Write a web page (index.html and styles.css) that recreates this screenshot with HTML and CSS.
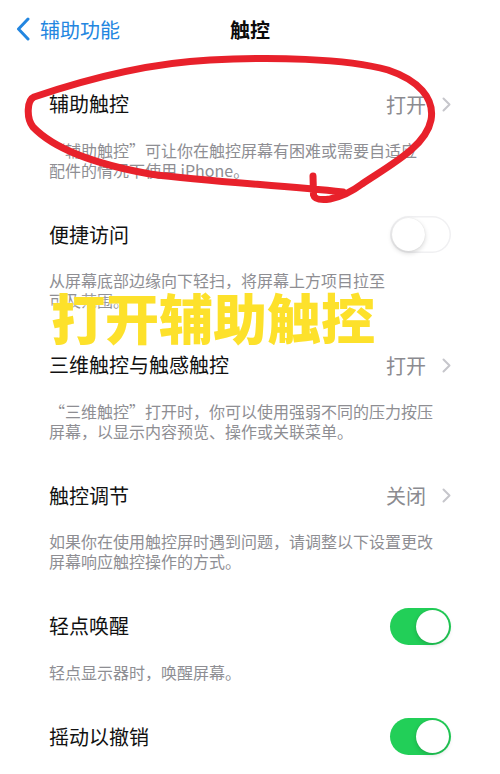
FILE: index.html
```html
<!DOCTYPE html>
<html lang="zh-CN">
<head>
    <meta charset="UTF-8">
    <meta name="viewport" content="width=device-width, initial-scale=1.0">
    <title>触控</title>
    <link rel="stylesheet" href="styles.css">
</head>
<body>
    <div class="page">
        <header class="nav">
            <a class="back" href="#">
                <svg class="back-icon" width="16" height="24" viewBox="0 0 16 24">
                    <path d="M13 2 L3.5 12 L13 22" fill="none" stroke="currentColor" stroke-width="3" stroke-linecap="round" stroke-linejoin="round"/>
                </svg>
                <span>辅助功能</span>
            </a>
            <h1 class="title">触控</h1>
        </header>

        <div class="list">
            <div class="section">
                <div class="row">
                    <span class="label">辅助触控</span>
                    <span class="value">打开<svg class="chevron" width="9" height="15" viewBox="0 0 9 15"><path d="M1.5 1.5 L7.5 7.5 L1.5 13.5" fill="none" stroke="currentColor" stroke-width="2" stroke-linecap="round" stroke-linejoin="round"/></svg></span>
                </div>
                <p class="desc">“辅助触控”可让你在触控屏幕有困难或需要自适应<br>配件的情况下使用 iPhone。</p>
            </div>

            <div class="section">
                <div class="row">
                    <span class="label">便捷访问</span>
                    <span class="switch"></span>
                </div>
                <p class="desc">从屏幕底部边缘向下轻扫，将屏幕上方项目拉至<br>可及范围。</p>
            </div>

            <div class="section">
                <div class="row">
                    <span class="label">三维触控与触感触控</span>
                    <span class="value">打开<svg class="chevron" width="9" height="15" viewBox="0 0 9 15"><path d="M1.5 1.5 L7.5 7.5 L1.5 13.5" fill="none" stroke="currentColor" stroke-width="2" stroke-linecap="round" stroke-linejoin="round"/></svg></span>
                </div>
                <p class="desc">“三维触控”打开时，你可以使用强弱不同的压力按压<br>屏幕，以显示内容预览、操作或关联菜单。</p>
            </div>

            <div class="section">
                <div class="row">
                    <span class="label">触控调节</span>
                    <span class="value">关闭<svg class="chevron" width="9" height="15" viewBox="0 0 9 15"><path d="M1.5 1.5 L7.5 7.5 L1.5 13.5" fill="none" stroke="currentColor" stroke-width="2" stroke-linecap="round" stroke-linejoin="round"/></svg></span>
                </div>
                <p class="desc">如果你在使用触控屏时遇到问题，请调整以下设置更改<br>屏幕响应触控操作的方式。</p>
            </div>

            <div class="section">
                <div class="row">
                    <span class="label">轻点唤醒</span>
                    <span class="switch on"></span>
                </div>
                <p class="desc">轻点显示器时，唤醒屏幕。</p>
            </div>

            <div class="section">
                <div class="row">
                    <span class="label">摇动以撤销</span>
                    <span class="switch on"></span>
                </div>
                <p class="desc">如果你容易不小心摇动 iPhone，可以停用“摇动以撤销”。</p>
            </div>
        </div>

        <!-- hand-drawn annotation on top of the screenshot -->
        <svg class="scribble" width="500" height="220" viewBox="0 0 500 220">
            <path d="M313 176 L313.5 195 Q315 201 330 199 Q346 196 362 184 C392 164 426 146 431 120 C435 98 418 80 388 70 C345 58 270 57 210 60 C150 63 90 78 34 97 C27 100 26 118 33 127 C55 150 100 165 150 174 C210 182 280 185 343 192"
                  fill="none" stroke="#e8212b" stroke-width="7" stroke-linecap="round" stroke-linejoin="round"/>
        </svg>
        <div class="callout">打开辅助触控</div>
    </div>
</body>
</html>
```

FILE: styles.css
```css
* {
    margin: 0;
    padding: 0;
    box-sizing: border-box;
}
body {
    background: #fff;
    font-family: "Noto Sans CJK SC", "Noto Sans", sans-serif;
    color: #111;
}
.page {
    position: relative;
    width: 500px;
    height: 774px;
    overflow: hidden;
}
.nav {
    position: relative;
    height: 58px;
    display: flex;
    align-items: center;
    justify-content: center;
}
.back {
    position: absolute;
    left: 15px;
    top: 0;
    height: 58px;
    display: flex;
    align-items: center;
    gap: 9px;
    color: #2386e0;
    text-decoration: none;
    font-size: 20px;
}
.title {
    font-size: 20px;
    font-weight: 700;
    color: #0c0c0c;
}
.list {
    padding: 21px 49px 0;
}
.row {
    height: 50px;
    display: flex;
    align-items: center;
    justify-content: space-between;
}
.label {
    font-size: 20px;
    line-height: 50px;
}
.value {
    display: flex;
    align-items: center;
    gap: 16px;
    font-size: 20px;
    color: #8b8b90;
}
.chevron {
    color: #c6c6cb;
}
.desc {
    padding-top: 10.5px;
    margin-bottom: 30px;
    font-size: 16px;
    line-height: 20px;
    color: #8e8e93;
    white-space: nowrap;
}
.switch {
    position: relative;
    width: 61px;
    height: 37px;
    border-radius: 18.5px;
    background: #fff;
    box-shadow: inset 0 0 0 1.5px #f0f0f2;
}
.switch::after {
    content: "";
    position: absolute;
    top: 2px;
    left: 2px;
    width: 33px;
    height: 33px;
    border-radius: 50%;
    background: #fff;
    box-shadow: 0 2px 5px rgba(0, 0, 0, 0.16), 0 0 1px rgba(0, 0, 0, 0.12);
}
.switch.on {
    background: #22cf58;
    box-shadow: none;
}
.switch.on::after {
    left: 26px;
}
.scribble {
    position: absolute;
    left: 0;
    top: 0;
}
.callout {
    position: absolute;
    left: 51px;
    top: 290px;
    font-size: 54px;
    line-height: 54px;
    font-weight: 900;
    color: #fde12b;
    text-shadow: 0 0 3px #fff;
}
```
